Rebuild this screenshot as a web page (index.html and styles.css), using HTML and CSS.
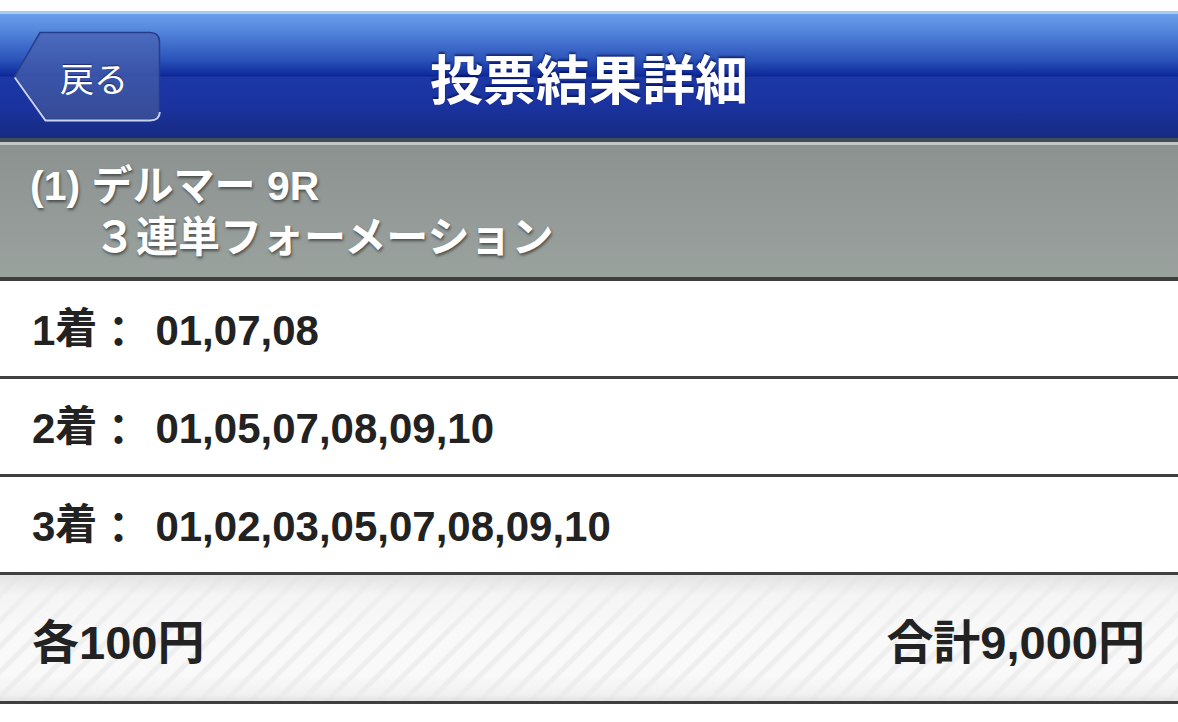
FILE: index.html
```html
<!DOCTYPE html>
<html lang="ja">
<head>
<meta charset="utf-8">
<title>投票結果詳細</title>
<link rel="stylesheet" href="styles.css">
</head>
<body>
<div class="page">
  <header class="navbar">
    <div class="back">
      <svg class="back-shape" viewBox="0 0 148 92" width="148" height="92" aria-hidden="true">
        <defs>
          <linearGradient id="bg" x1="0" y1="0" x2="0" y2="1">
            <stop offset="0" stop-color="#4a66b8" stop-opacity="0.85"/>
            <stop offset="0.5" stop-color="#3f59aa" stop-opacity="0.85"/>
            <stop offset="1" stop-color="#3a4e96" stop-opacity="0.9"/>
          </linearGradient>
        </defs>
        <path d="M27 1.5 H137 Q146.5 1.5 146.5 11 V79 Q146.5 88.5 137 88.5 H33 L1.5 45.5 Z" fill="url(#bg)" stroke="#263d8c" stroke-width="1.5"/>
        <path d="M1.8 46.5 L32.5 89.5 H137 Q146.5 89.5 146.8 81" fill="none" stroke="#c9d3ee" stroke-width="2"/>
      </svg>
      <span class="back-label">戻る</span>
    </div>
    <h1 class="title">投票結果詳細</h1>
    <div class="nav-right"></div>
  </header>
  <div class="nav-sep"></div>

  <section class="race">
    <div class="race-line1">(1) デルマー 9R</div>
    <div class="race-line2">３連単フォーメーション</div>
  </section>

  <div class="rows">
    <div class="row"><span class="label">1<span class="kj">着</span><span class="colon">：</span></span><span class="value">01,07,08</span></div>
    <div class="row"><span class="label">2<span class="kj">着</span><span class="colon">：</span></span><span class="value">01,05,07,08,09,10</span></div>
    <div class="row"><span class="label">3<span class="kj">着</span><span class="colon">：</span></span><span class="value">01,02,03,05,07,08,09,10</span></div>
  </div>

  <footer class="summary">
    <span class="each">各100円</span>
    <span class="total">合計9,000円</span>
  </footer>
</div>
</body>
</html>
```

FILE: styles.css
```css
html, body {
  margin: 0;
  padding: 0;
  background: #ffffff;
}

body {
  font-family: "Liberation Sans", "Noto Sans CJK JP", sans-serif;
  width: 1178px;
  height: 722px;
  overflow: hidden;
}

.page {
  padding-top: 11px;
}

.navbar {
  height: 124px;
  border-top: 3px solid #a9cbee;
  border-bottom: 4px solid #434d58;
  background: linear-gradient(to bottom,
    #6a9eea 0px,
    #4f80d8 20px,
    #2c55bb 45px,
    #0f2b9c 61px,
    #0b2390 62px,
    #1c38a6 63px,
    #1a33a0 90px,
    #172b82 124px);
  display: grid;
  grid-template-columns: 1fr auto 1fr;
  align-items: center;
}

.nav-sep {
  height: 3px;
  background: #c3c7c3;
}

.back {
  position: relative;
  width: 148px;
  height: 92px;
  margin-left: 13px;
  margin-top: 2px;
  display: flex;
  align-items: center;
  justify-content: center;
  justify-self: start;
}

.back-shape {
  position: absolute;
  left: 0;
  top: 0;
}

.back-label {
  position: relative;
  color: #ffffff;
  font-size: 34px;
  padding-left: 14px;
  text-shadow: 0 -1px 1px rgba(0, 0, 40, 0.5);
}

.title {
  margin: 0;
  color: #ffffff;
  font-size: 53px;
  font-weight: bold;
  letter-spacing: 0;
  text-shadow: 0 -2px 2px rgba(0, 0, 50, 0.55);
  padding-top: 2px;
}

.race {
  height: 136px;
  box-sizing: border-box;
  padding: 15px 0 0 30px;
  background: linear-gradient(to bottom, #8c9290, #9aa29e);
  border-bottom: 4px solid #3e3e3e;
  color: #ffffff;
  font-weight: bold;
  font-size: 41px;
  line-height: 52px;
  text-shadow: 1px 2px 3px rgba(0, 0, 0, 0.5);
}

.race-line2 {
  padding-left: 64px;
  font-size: 42px;
}

.rows {
  display: flex;
  flex-direction: column;
}

.row {
  height: 95px;
  line-height: 95px;
  border-bottom: 3px solid #404040;
  padding-left: 32px;
  color: #222222;
  font-size: 42px;
  font-weight: bold;
  background: #ffffff;
  white-space: nowrap;
}

.kj {
  vertical-align: 2px;
}

.colon {
  vertical-align: -2px;
}

.value {
  margin-left: 16px;
}

.summary {
  height: 126px;
  border-bottom: 3px solid #3f3f3f;
  display: flex;
  align-items: center;
  justify-content: space-between;
  padding: 0 33px 0 32px;
  color: #222222;
  font-size: 47px;
  font-weight: bold;
  background:
    linear-gradient(to bottom,
      rgba(225, 225, 225, 0.9) 0px,
      rgba(240, 240, 240, 0.5) 20px,
      rgba(255, 255, 255, 0) 60px,
      rgba(255, 255, 255, 0) 100px,
      rgba(235, 235, 235, 0.6) 120px,
      rgba(220, 220, 220, 0.8) 126px),
    repeating-linear-gradient(135deg,
      #f9f9f9 0px,
      #f9f9f9 11px,
      #eeeeee 13px,
      #eeeeee 16px,
      #f9f9f9 18px);
}
```
